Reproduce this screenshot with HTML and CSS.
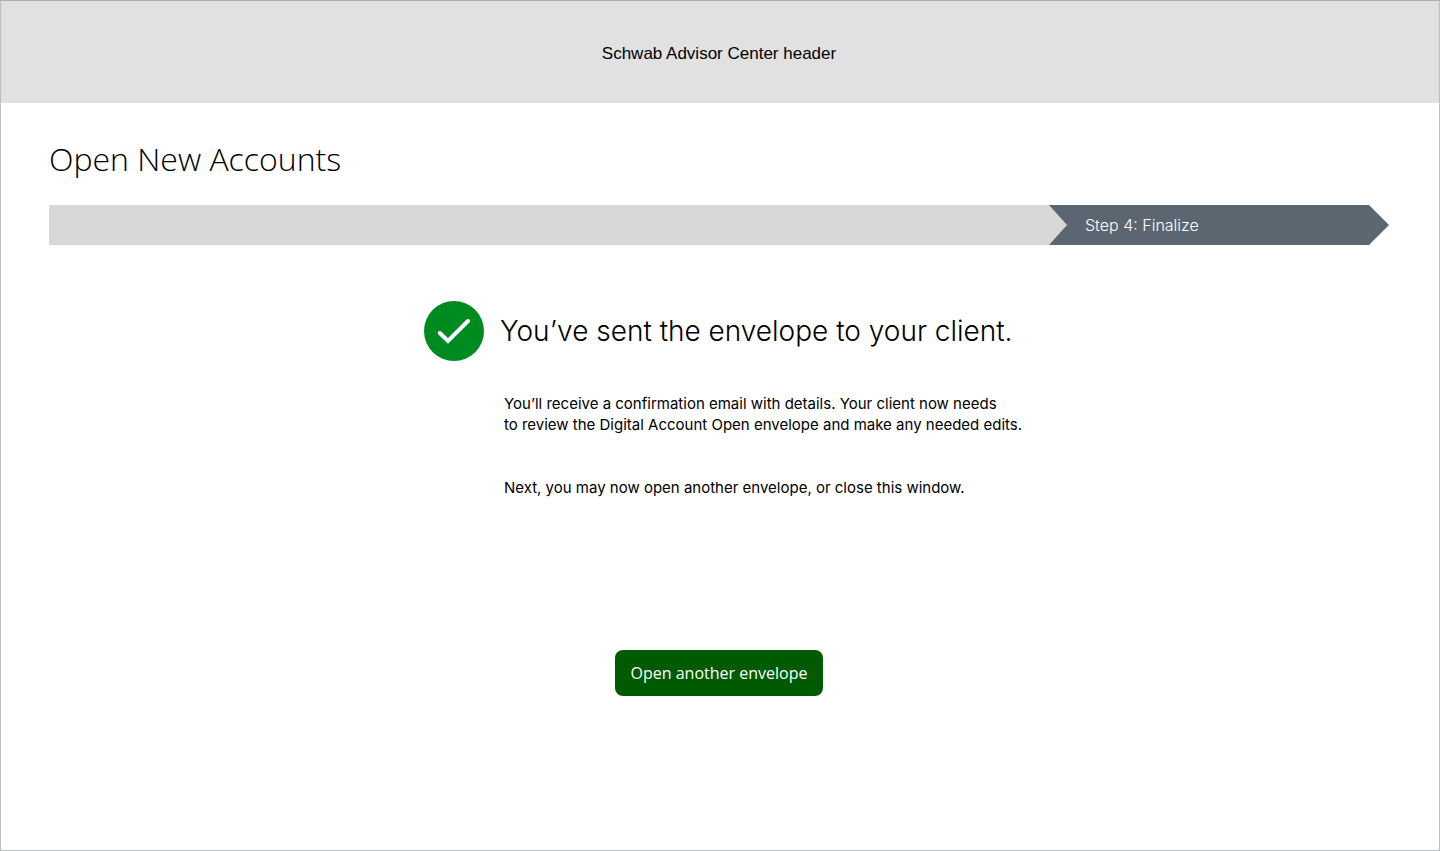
FILE: index.html
```html
<!DOCTYPE html>
<html lang="en">
<head>
  <meta charset="UTF-8">
  <meta name="viewport" content="width=device-width, initial-scale=1.0">
  <title>Open New Accounts</title>
  <link rel="stylesheet" href="styles.css">
</head>
<body>
  <div class="page">
    <header class="site-header">Schwab Advisor Center header</header>

    <main class="content">
      <h1 class="page-title">Open New Accounts</h1>

      <div class="steps">
        <div class="steps-done"></div>
        <div class="step-current">
          <svg class="notch" viewBox="0 0 18 40" aria-hidden="true"><path d="M0 0L18 20L0 40Z" fill="#d8d8d8"/></svg>
          <span class="step-label">Step 4: Finalize</span>
        </div>
      </div>

      <section class="confirmation">
        <svg class="check" viewBox="0 0 60 60" aria-hidden="true">
          <circle cx="30" cy="30" r="30" fill="#008b20"/>
          <path d="M15.8 32L24 40L44 20" fill="none" stroke="#fff" stroke-width="4" stroke-linecap="round" stroke-linejoin="miter"/>
        </svg>
        <h2 class="confirmation-title">You’ve sent the envelope to your client.</h2>
        <div class="message">
          <p>You’ll receive a confirmation email with details. Your client now needs<br>to review the Digital Account Open envelope and make any needed edits.</p>
          <p>Next, you may now open another envelope, or close this window.</p>
        </div>
      </section>

      <button class="primary-button" type="button">Open another envelope</button>
    </main>
  </div>
</body>
</html>
```
FILE: styles.css
```css
* {
  box-sizing: border-box;
}

body {
  margin: 0;
  background: #fff;
  color: #000;
  font-family: Inter, "Liberation Sans", sans-serif;
  font-size: 15px;
}

.page {
  min-height: 100vh;
  border: 1px solid #bcc1c6;
  border-top-color: #a9adb1;
}

.site-header {
  display: flex;
  align-items: center;
  justify-content: center;
  height: 102px;
  padding: 4px 2px 0 0;
  background: #e1e1e1;
  font-family: "Liberation Sans", Arial, sans-serif;
  font-size: 17px;
  line-height: 20px;
}

.content {
  display: flex;
  flex-direction: column;
  padding: 34px 50px 48px 48px;
}

.page-title {
  margin: 0 0 24px;
  font-family: "Open Sans", sans-serif;
  font-size: 32px;
  font-weight: 300;
  line-height: 44px;
}

.steps {
  display: flex;
  height: 40px;
}

.steps-done {
  flex: 1;
  background: #d8d8d8;
}

.step-current {
  display: flex;
  align-items: center;
  gap: 18px;
  width: 340px;
  background: #5b6670;
  color: #fff;
  clip-path: polygon(0 0, calc(100% - 20px) 0, 100% 50%, calc(100% - 20px) 100%, 0 100%);
}

.notch {
  width: 18px;
  height: 40px;
}

.step-label {
  font-size: 16px;
  font-weight: 300;
  line-height: 20px;
}

.confirmation {
  display: grid;
  grid-template-columns: 60px auto;
  column-gap: 16px;
  align-items: center;
  align-self: center;
  margin-top: 56px;
  padding-left: 8px;
}

.check {
  width: 60px;
  height: 60px;
}

.confirmation-title {
  margin: 0;
  font-size: 28px;
  font-weight: 350;
  line-height: 36px;
}

.message {
  grid-column: 2;
  padding: 32px 0 0 4px;
  line-height: 21px;
}

.message p {
  margin: 0 0 42px;
}

.primary-button {
  align-self: center;
  height: 46px;
  margin-top: 110px;
  padding: 0 16px;
  border: none;
  border-radius: 8px;
  background: #005a00;
  color: #fff;
  font-family: "Open Sans", sans-serif;
  font-size: 16px;
  cursor: pointer;
}
```
